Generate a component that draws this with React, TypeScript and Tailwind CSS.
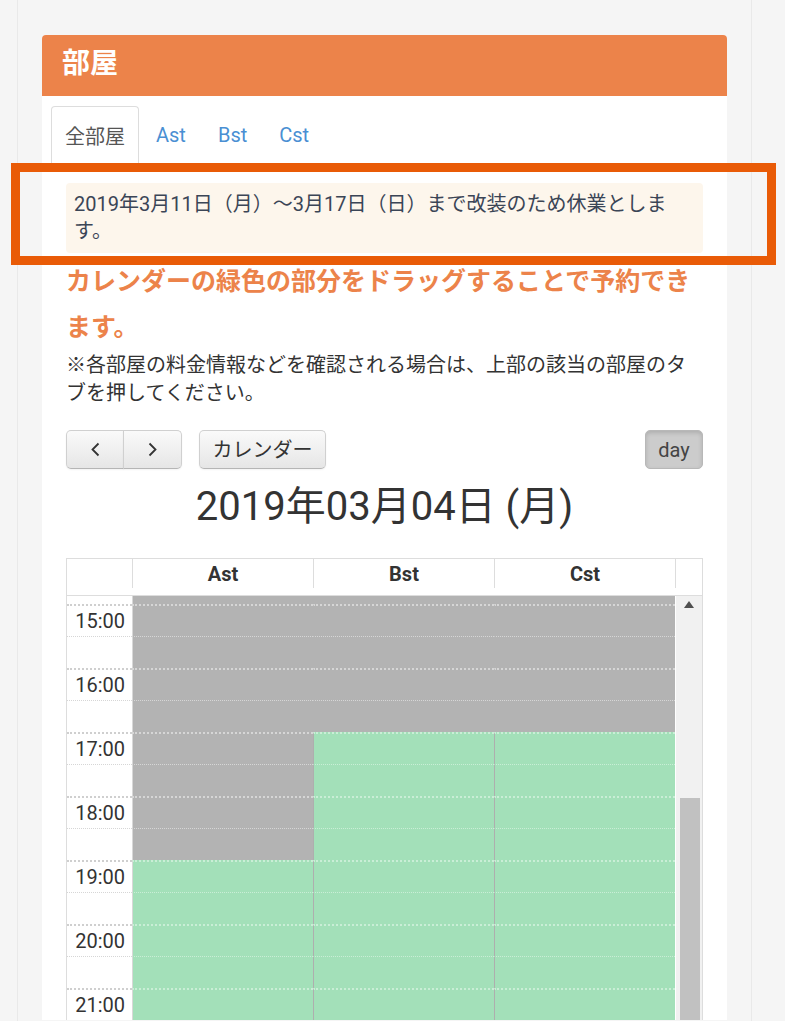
import React from 'react';

type Slot = { h: number; hour: boolean; label?: string };

const slots: Slot[] = [
  { h: 8, hour: false },
  { h: 32, hour: true, label: '15:00' },
  { h: 32, hour: false },
  { h: 32, hour: true, label: '16:00' },
  { h: 32, hour: false },
  { h: 32, hour: true, label: '17:00' },
  { h: 32, hour: false },
  { h: 32, hour: true, label: '18:00' },
  { h: 32, hour: false },
  { h: 32, hour: true, label: '19:00' },
  { h: 32, hour: false },
  { h: 32, hour: true, label: '20:00' },
  { h: 32, hour: false },
  { h: 32, hour: true, label: '21:00' },
  { h: 32, hour: false },
];

// slot index (in the list above) from which the room is bookable (green)
const rooms = [
  { name: 'Ast', openFrom: 9, first: true },
  { name: 'Bst', openFrom: 5, first: false },
  { name: 'Cst', openFrom: 5, first: false },
];

const btn =
  'h-[39px] flex items-center justify-center text-[20px] text-[#333] bg-gradient-to-b from-[#fafafa] to-[#e6e6e6] border border-[#d0d0d0] border-b-[#b5b5b5] shadow-[0_1px_2px_rgba(0,0,0,0.05)]';

const Chevron: React.FC<{ dir: 'l' | 'r' }> = ({ dir }) => (
  <svg width="9" height="15" viewBox="0 0 9 15" fill="none" stroke="#333" strokeWidth={1.8}>
    {dir === 'l' ? <polyline points="7.5,1.5 1.5,7.5 7.5,13.5" /> : <polyline points="1.5,1.5 7.5,7.5 1.5,13.5" />}
  </svg>
);

const DayColumn: React.FC<{ openFrom: number; first: boolean }> = ({ openFrom, first }) => (
  <div className="shrink-0 w-[181px] flex flex-col">
    {slots.map((s, i) => {
      const green = i >= openFrom;
      const line = i === 0 ? '' : s.hour ? 'border-t-2 border-dotted' : 'border-t border-dotted';
      const side = first
        ? 'border-l-[#d8d8d8]'
        : green
          ? 'border-l-[#aeaeae]'
          : 'border-l-[#b3b3b3]';
      return (
        <div
          key={i}
          style={{ height: s.h }}
          className={`shrink-0 box-border border-l ${line} [border-left-style:solid] ${side} ${
            green ? 'bg-[#a3e0b9] border-t-[#c9eed6]' : 'bg-[#b3b3b3] border-t-[#d6d6d6]'
          }`}
        />
      );
    })}
  </div>
);

export default function App() {
  return (
    <div className="relative min-h-screen bg-[#f5f5f5] font-['Roboto','Noto_Sans_CJK_JP',sans-serif]">
      <div className="ml-[17px] w-[735px] min-h-screen border-x border-[#e9e9e9] px-[24px] pt-[35px]">
        <div className="w-[685px] bg-white rounded-t-[4px] overflow-hidden">
          <div className="h-[61px] bg-[#ec834a] flex items-center pl-[20px] pb-[4px]">
            <h1 className="text-[28px] font-bold text-white leading-none">部屋</h1>
          </div>

          <div className="px-[9px] pt-[9px] border-b border-[#dddddd]">
            <div className="flex items-end">
              <div className="h-[60px] px-[13px] flex items-center border border-b-0 border-[#dddddd] rounded-t-[4px] text-[20px] text-[#555] -mb-px bg-white">
                全部屋
              </div>
              <div className="ml-[1px] h-[60px] px-4 flex items-center text-[20px] text-[#4a8fd3]">Ast</div>
              <div className="h-[60px] px-4 flex items-center text-[20px] text-[#4a8fd3]">Bst</div>
              <div className="h-[60px] px-4 flex items-center text-[20px] text-[#4a8fd3]">Cst</div>
            </div>
          </div>

          <div className="px-[24px]">
            <div className="mt-[17px] bg-[#fdf6ec] rounded-[4px] pl-[8px] pr-[24px] py-[8px] text-[20px] leading-[27px] text-[#3b4556]">
              2019年3月11日（月）～3月17日（日）まで改装のため休業とします。
            </div>

            <p className="mt-[6px] text-[25px] font-bold leading-[46px] text-[#ec834a]">
              カレンダーの緑色の部分をドラッグすることで予約できます。
            </p>
            <p className="text-[20px] leading-[28px] text-[#333]">
              ※各部屋の料金情報などを確認される場合は、上部の該当の部屋のタブを押してください。
            </p>

            <div className="mt-[23px] flex items-center justify-between">
              <div className="flex items-center gap-[17px]">
                <div className="flex">
                  <button className={`${btn} w-[58px] rounded-l-[5px]`}>
                    <Chevron dir="l" />
                  </button>
                  <button className={`${btn} w-[59px] rounded-r-[5px] -ml-px`}>
                    <Chevron dir="r" />
                  </button>
                </div>
                <button className={`${btn} w-[127px] rounded-[5px]`}>カレンダー</button>
              </div>
              <button className="h-[39px] w-[58px] flex items-center justify-center rounded-[5px] bg-[#cccccc] border border-[#b8b8b8] text-[20px] text-[#444] shadow-[inset_0_2px_4px_rgba(0,0,0,0.15)]">
                day
              </button>
            </div>

            <h2 className="mt-[16px] text-center text-[40px] leading-[44px] text-[#333]">2019年03月04日 (月)</h2>

            <div className="mt-[29px] w-[637px] border-x border-t border-[#dddddd]">
              <div className="flex h-[29px]">
                <div className="w-[65px]" />
                {rooms.map((r) => (
                  <div key={r.name} className="w-[181px] border-l border-[#dddddd] flex items-center justify-center text-[20px] font-bold text-[#333]">
                    {r.name}
                  </div>
                ))}
                <div className="w-[27px] border-l border-[#dddddd]" />
              </div>
              <div className="h-[8px] border-b border-[#dddddd]" />

              <div className="flex h-[424px] overflow-hidden">
                <div className="w-[65px] shrink-0 flex flex-col bg-white">
                  {slots.map((s, i) => (
                    <div
                      key={i}
                      style={{ height: s.h }}
                      className={`shrink-0 box-border flex items-center justify-end pr-[7px] text-[20px] text-[#333] ${
                        i === 0 ? '' : s.hour ? 'border-t-2 border-dotted border-[#cfcfcf]' : 'border-t border-dotted border-[#d6d6d6]'
                      }`}
                    >
                      {s.label}
                    </div>
                  ))}
                </div>
                {rooms.map((r) => (
                  <DayColumn key={r.name} openFrom={r.openFrom} first={r.first} />
                ))}
                <div className="w-[27px] shrink-0 bg-[#f1f1f1] border-l border-white flex flex-col items-center">
                  <div className="mt-[5px] w-0 h-0 border-x-[5px] border-x-transparent border-b-[7px] border-b-[#505050]" />
                  <div className="mt-[190px] ml-[1px] w-[20px] flex-1 bg-[#c1c1c1]" />
                </div>
              </div>
            </div>
          </div>
        </div>
      </div>

      {/* annotation box */}
      <div className="pointer-events-none absolute left-[11px] top-[163px] w-[765px] h-[102px] border-[9px] border-[#e95b07]" />
    </div>
  );
}
